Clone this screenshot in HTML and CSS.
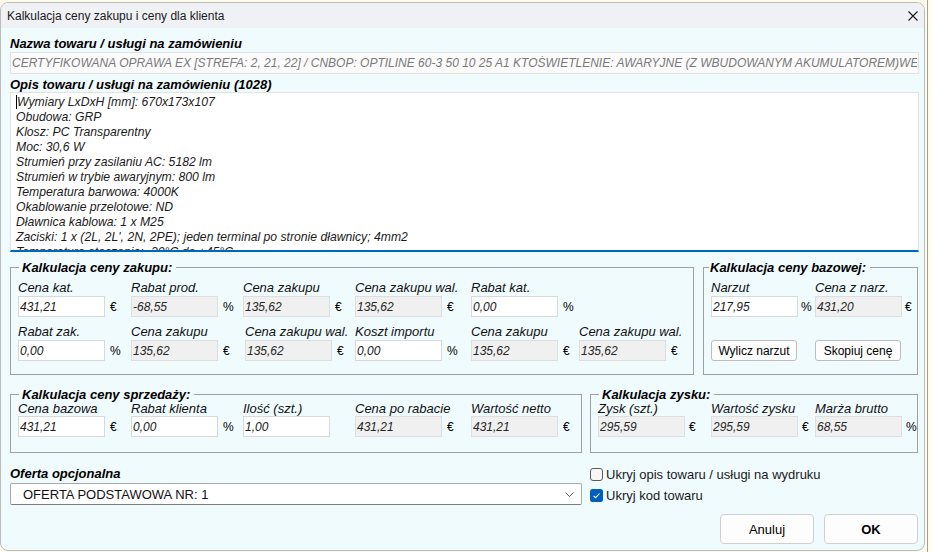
FILE: index.html
```html
<!DOCTYPE html>
<html>
	<head>
		<meta charset="UTF-8">
		<title>Kalkulacja ceny zakupu i ceny dla klienta</title>
		<link rel="stylesheet" href="styles.css">
	</head>
	<body>
		<div class="dialog">
			<div class="titlebar">
				<span>Kalkulacja ceny zakupu i ceny dla klienta</span>
				<svg class="close" width="10" height="10" viewBox="0 0 10 10"><path d="M0.5 0.5L9.5 9.5M9.5 0.5L0.5 9.5" stroke="#1a1a1a" stroke-width="1.1" fill="none"/></svg>
			</div>
			<div class="content">
				<div class="label">Nazwa towaru / usługi na zamówieniu</div>
				<input class="name" readonly value="CERTYFIKOWANA OPRAWA EX [STREFA: 2, 21, 22] / CNBOP: OPTILINE 60-3 50 10 25 A1 KTOŚWIETLENIE: AWARYJNE (Z WBUDOWANYM AKUMULATOREM)WERSJA: 3H">
				<div class="label">Opis towaru / usługi na zamówieniu (1028)</div>
				<div class="desc"><span class="caret"></span>Wymiary LxDxH [mm]: 670x173x107<br>Obudowa: GRP<br>Klosz: PC Transparentny<br>Moc: 30,6 W<br>Strumień przy zasilaniu AC: 5182 lm<br>Strumień w trybie awaryjnym: 800 lm<br>Temperatura barwowa: 4000K<br>Okablowanie przelotowe: ND<br>Dławnica kablowa: 1 x M25<br>Zaciski: 1 x (2L, 2L', 2N, 2PE); jeden terminal po stronie dławnicy; 4mm2<br>Temperatura otoczenia: -20°C do +45°C</div>

				<div class="row row-top">
					<fieldset class="box zakup">
						<legend>Kalkulacja ceny zakupu:</legend>
						<div class="grid grid-zakup">
							<div class="cell"><label>Cena kat.</label><div class="field"><input value="431,21"><span class="unit">€</span></div></div>
							<div class="cell"><label>Rabat prod.</label><div class="field"><input readonly value="-68,55"><span class="unit">%</span></div></div>
							<div class="cell"><label>Cena zakupu</label><div class="field"><input readonly value="135,62"><span class="unit">€</span></div></div>
							<div class="cell"><label>Cena zakupu wal.</label><div class="field"><input readonly value="135,62"><span class="unit">€</span></div></div>
							<div class="cell"><label>Rabat kat.</label><div class="field"><input value="0,00"><span class="unit">%</span></div></div>
							<div></div>
							<div class="cell"><label>Rabat zak.</label><div class="field"><input value="0,00"><span class="unit">%</span></div></div>
							<div class="cell"><label>Cena zakupu</label><div class="field"><input readonly value="135,62"><span class="unit">€</span></div></div>
							<div class="cell shift"><label>Cena zakupu wal.</label><div class="field"><input readonly value="135,62"><span class="unit">€</span></div></div>
							<div class="cell"><label>Koszt importu</label><div class="field"><input value="0,00"><span class="unit">%</span></div></div>
							<div class="cell"><label>Cena zakupu</label><div class="field"><input readonly value="135,62"><span class="unit">€</span></div></div>
							<div class="cell"><label>Cena zakupu wal.</label><div class="field"><input readonly value="135,62"><span class="unit">€</span></div></div>
						</div>
					</fieldset>
					<fieldset class="box baz">
						<legend>Kalkulacja ceny bazowej:</legend>
						<div class="grid grid-baz">
							<div class="cell"><label>Narzut</label><div class="field"><input value="217,95"><span class="unit">%</span></div></div>
							<div class="cell"><label>Cena z narz.</label><div class="field"><input readonly value="431,20"><span class="unit">€</span></div></div>
							<div class="cell cell-btn"><button class="btn-sm">Wylicz narzut</button></div>
							<div class="cell cell-btn"><button class="btn-sm">Skopiuj cenę</button></div>
						</div>
					</fieldset>
				</div>

				<div class="row row-mid">
					<fieldset class="box sprz">
						<legend>Kalkulacja ceny sprzedaży:</legend>
						<div class="grid grid-sprz">
							<div class="cell"><label>Cena bazowa</label><div class="field"><input value="431,21"><span class="unit">€</span></div></div>
							<div class="cell"><label>Rabat klienta</label><div class="field"><input value="0,00"><span class="unit">%</span></div></div>
							<div class="cell"><label>Ilość (szt.)</label><div class="field"><input value="1,00"></div></div>
							<div class="cell"><label>Cena po rabacie</label><div class="field"><input readonly value="431,21"><span class="unit">€</span></div></div>
							<div class="cell"><label>Wartość netto</label><div class="field"><input readonly value="431,21"><span class="unit">€</span></div></div>
						</div>
					</fieldset>
					<fieldset class="box zysk">
						<legend>Kalkulacja zysku:</legend>
						<div class="grid grid-zysk">
							<div class="cell"><label>Zysk (szt.)</label><div class="field"><input readonly value="295,59"><span class="unit">€</span></div></div>
							<div class="cell"><label>Wartość zysku</label><div class="field"><input readonly value="295,59"><span class="unit">€</span></div></div>
							<div class="cell"><label>Marża brutto</label><div class="field"><input readonly value="68,55"><span class="unit">%</span></div></div>
						</div>
					</fieldset>
				</div>

				<div class="row row-bottom">
					<div class="offer">
						<div class="label">Oferta opcjonalna</div>
						<div class="select">
							<span>OFERTA PODSTAWOWA NR: 1</span>
							<svg width="9" height="5" viewBox="0 0 9 5"><polyline points="0.5,0.5 4.5,4.5 8.5,0.5" fill="none" stroke="#555" stroke-width="1"/></svg>
						</div>
					</div>
					<div class="opts">
						<div class="check">
							<svg width="13" height="13" viewBox="0 0 13 13"><rect x="0.5" y="0.5" width="12" height="12" rx="2.5" fill="#f6f6f6" stroke="#5a5a5a"/></svg>
							<span>Ukryj opis towaru / usługi na wydruku</span>
						</div>
						<div class="check">
							<svg width="13" height="13" viewBox="0 0 13 13"><rect x="0" y="0" width="13" height="13" rx="2.5" fill="#005fb8"/><path d="M3.6 6.8L5.6 8.7L9.5 4.5" fill="none" stroke="#fff" stroke-width="1.1"/></svg>
							<span>Ukryj kod towaru</span>
						</div>
						<div class="buttons">
							<button class="btn">Anuluj</button>
							<button class="btn btn-ok">OK</button>
						</div>
					</div>
				</div>
			</div>
		</div>
	</body>
</html>
```
FILE: styles.css
```css
*{box-sizing:border-box;}
body{
	margin:0;padding-top:2px;height:552px;overflow:hidden;
	font-family:"Liberation Sans",Arial,sans-serif;color:#000;
	background:linear-gradient(to right,transparent 927px,#a0a0a0 927px,#a0a0a0 928px,transparent 928px),#fdfbea;
}
.dialog{width:925px;height:549px;background:#f0fbfe;border:1px solid #bcbcbc;border-radius:8px;overflow:hidden;}
.titlebar{
	height:25px;background:#eff1f5;display:flex;align-items:center;justify-content:space-between;
	padding:0 6px 0 6px;font-family:"Segoe UI","Liberation Sans",sans-serif;font-size:12px;color:#1a1a1a;
}
.content{padding:8px 5px 0 9px;}
.label{font-weight:bold;font-style:italic;font-size:13px;line-height:15px;white-space:nowrap;}
.name{
	display:block;width:100%;height:22px;margin:1px 0 3px;padding:0 1px;
	border:1px solid #e1e1e1;background:#fbfbfb;
	font:italic 12px "Liberation Sans",Arial,sans-serif;color:#7a7a7a;
}
.desc{
	height:160px;background:#fff;border:1px solid #e3e3e3;border-bottom:2px solid #0067c0;
	padding:2px 5px;font-style:italic;font-size:12.2px;line-height:15px;color:#1b1b1b;
	overflow:hidden;white-space:nowrap;
}
.caret{display:inline-block;width:1px;height:14px;background:#000;vertical-align:-3px;}

.row{display:flex;gap:9px;}
.row-top{margin-top:8px;}
.row-mid{margin-top:12px;gap:8px;}
.row-bottom{margin-top:13px;gap:8px;}

.box{margin:0;border:1px solid #a0a0a0;padding:4px 7px 13px;min-width:0;}
.box legend{font-weight:bold;font-style:italic;font-size:13px;line-height:15px;padding:0 4px 0 3px;margin-left:1px;white-space:nowrap;}
.zakup{width:684px;}
.baz{width:215px;}
.baz legend{margin-left:-2px;padding-left:1px;}
.sprz{width:572px;padding:0 7px 15px;}
.zysk{width:328px;padding:0 7px 15px;}

.grid{display:grid;row-gap:6px;}
.grid-zakup{grid-template-columns:113px 112px 112px 116px 108px 1fr;}
.grid-baz{grid-template-columns:104px 1fr;}
.grid-sprz{grid-template-columns:113px 112px 112px 116px 1fr;}
.grid-zysk{grid-template-columns:113px 104px 1fr;}
.cell label{display:block;font-style:italic;font-size:13px;line-height:17px;white-space:nowrap;color:#111;}
.sprz .cell label,.zysk .cell label{line-height:14px;}
.shift{margin-left:2px;}
.cell-btn{padding-top:17px;}
.field{display:flex;align-items:center;}
.field input{
	width:87px;height:21px;padding:0 1px;border:1px solid #d9d9d9;background:#fff;
	font:italic 12px "Liberation Sans",Arial,sans-serif;color:#1a1a1a;outline:none;
}
.field input[readonly]{background:#f0f0f0;border-color:#dedede;color:#262626;}
.unit{font-size:12px;margin-left:5px;}
.baz .unit{margin-left:3px;}
.zysk .unit{margin-left:4px;}

.btn-sm{
	width:86px;height:21px;padding:0;border:1px solid #bdbdbd;border-radius:3px;background:#fdfdfd;
	font:12px "Liberation Sans",Arial,sans-serif;color:#000;
}

.offer{width:572px;}
.offer .label{margin-bottom:2px;}
.select{
	height:22px;background:#fff;border:1px solid #a9a9a9;border-bottom-color:#7d7d7d;border-radius:2px;
	display:flex;align-items:center;justify-content:space-between;padding:0 7px 0 12px;font-size:13px;color:#111;
}
.opts{width:328px;display:flex;flex-direction:column;margin-top:-2px;}
.check{display:flex;align-items:center;gap:3px;height:21px;font-family:"Segoe UI","Liberation Sans",sans-serif;font-size:13px;color:#1a1a1a;}
.buttons{display:flex;justify-content:flex-end;gap:10px;margin-top:8px;}
.btn{
	width:94px;height:30px;padding:0;border:1px solid #d0d0d0;border-radius:4px;background:#fdfdfd;
	font:13px "Liberation Sans",Arial,sans-serif;color:#000;
}
.btn-ok{font-weight:bold;}
```
